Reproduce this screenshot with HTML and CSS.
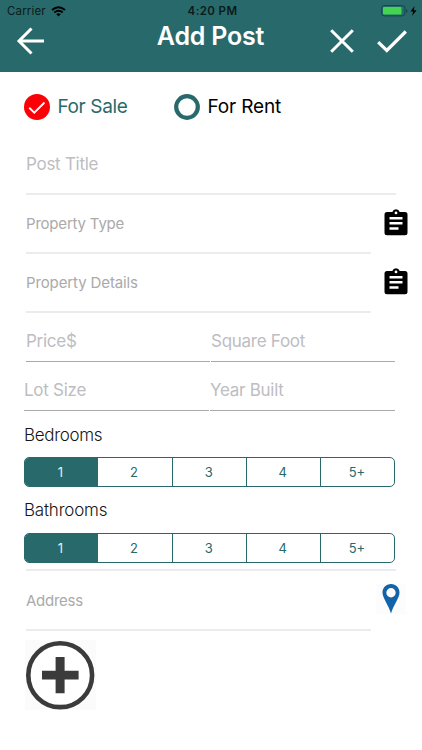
FILE: index.html
```html
<!DOCTYPE html>
<html lang="en">
<head>
<meta charset="utf-8">
<title>Add Post</title>
<link rel="stylesheet" href="styles.css">
</head>
<body>
<header class="header">
  <div class="status">
    <div class="carrier"><span>Carrier</span>
      <svg width="15" height="11" viewBox="0 0 15 11" fill="none" stroke="#000" stroke-width="2"><path d="M1 4Q7.500-1.600 14 4M3.300 6.500Q7.500 3 11.700 6.500"/><path d="M7.500 10.400 5.200 8.100Q7.500 6.300 9.800 8.100Z" fill="#000" stroke="none"/></svg>
    </div>
    <span class="time">4:20 PM</span>
    <svg class="battery" width="37" height="12" viewBox="0 0 37 12"><rect x=".6" y=".6" width="23.300" height="10.300" rx="2.500" fill="none" stroke="#164747"/><rect x="2" y="2" width="18.500" height="7.500" rx="1" fill="#43d551"/><path d="M25.200 4v4q1.300-.5 1.300-2t-1.300-2Z" fill="#164747"/><path d="m33.500 1-4 5.500h2.700L31 11l4.600-5.800h-2.800Z"/></svg>
  </div>
  <div class="nav">
    <svg class="back" width="29" height="28" viewBox="0 0 29 28" fill="none" stroke="#fff" stroke-width="3"><path d="M29 14H4M16.500 1.500 4 14l12.500 12.500"/></svg>
    <h1>Add Post</h1>
    <div class="actions">
      <svg width="24" height="24" viewBox="0 0 24 24" fill="none" stroke="#fff" stroke-width="3"><path d="m1.200 1.200 21.600 21.600M22.800 1.200 1.200 22.800"/></svg>
      <svg width="30" height="24" viewBox="0 0 30 24" fill="none" stroke="#fff" stroke-width="3.200"><path d="m1.200 13.200 8.600 8.300L28.800 2.500"/></svg>
    </div>
  </div>
</header>
<main class="form">
  <div class="choices">
    <div class="choice sale">
      <svg width="26" height="26" viewBox="0 0 26 26"><circle cx="13" cy="13" r="13" fill="#fb0006"/><path d="m5.300 13.700 5 4.900L20.500 8.500" fill="none" stroke="#fff" stroke-width="1.900"/></svg>
      <span>For Sale</span>
    </div>
    <div class="choice rent">
      <svg width="26" height="26" viewBox="0 0 26 26"><circle cx="13" cy="13" r="10.800" fill="none" stroke="#286a6b" stroke-width="4.200"/></svg>
      <span>For Rent</span>
    </div>
  </div>
  <div class="field title"><span>Post Title</span></div>
  <div class="row">
    <div class="field small type"><span>Property Type</span></div>
    <svg class="clip" width="24" height="27" viewBox="0 0 24 27"><path fill-rule="evenodd" d="M3 3h5.300a3.900 3.900 0 0 1 7.400 0H21q2.500 0 2.500 2.500v18.200q0 2.500-2.500 2.500H3Q.5 26.200.5 23.700V5.500Q.5 3 3 3Zm9-.5a1.400 1.400 0 1 0 0 2.800 1.400 1.400 0 0 0 0-2.800ZM5.500 8v2.500h13V8Zm0 5v2.500h13V13Zm0 5.200v2.500h9v-2.500Z"/></svg>
  </div>
  <div class="row">
    <div class="field small details"><span>Property Details</span></div>
    <svg class="clip" width="24" height="27" viewBox="0 0 24 27"><path fill-rule="evenodd" d="M3 3h5.300a3.900 3.900 0 0 1 7.400 0H21q2.500 0 2.500 2.500v18.200q0 2.500-2.500 2.500H3Q.5 26.200.5 23.700V5.500Q.5 3 3 3Zm9-.5a1.400 1.400 0 1 0 0 2.800 1.400 1.400 0 0 0 0-2.800ZM5.500 8v2.500h13V8Zm0 5v2.500h13V13Zm0 5.200v2.500h9v-2.500Z"/></svg>
  </div>
  <div class="pair first"><div><span>Price$</span></div><div><span>Square Foot</span></div></div>
  <div class="pair second"><div><span>Lot Size</span></div><div><span>Year Built</span></div></div>
  <h2 class="bed">Bedrooms</h2>
  <div class="segments"><span class="on">1</span><span>2</span><span>3</span><span>4</span><span>5+</span></div>
  <h2 class="bath">Bathrooms</h2>
  <div class="segments"><span class="on">1</span><span>2</span><span>3</span><span>4</span><span>5+</span></div>
  <div class="divider"></div>
  <div class="row address">
    <div class="field small addr"><span>Address</span></div>
    <svg class="pin" width="30" height="30" viewBox="0 0 30 30"><path fill="#fcfcfc" d="M0 0h30v30H0z"/><path fill="#1263a8" fill-rule="evenodd" d="M15 0c5 0 8.500 3.800 8.500 8.500C23.500 14 17 22 15 29.500 13 22 6.500 14 6.500 8.500 6.500 3.800 10 0 15 0Zm0 4a4.700 4.700 0 1 0 0 9.400A4.700 4.700 0 0 0 15 4Z"/></svg>
  </div>
  <svg class="add" width="71" height="70" viewBox="0 0 71 70"><path fill="#fbfbfb" d="M0 0h71v70H0z"/><circle cx="35.200" cy="35.200" r="31.900" fill="#fff" stroke="#3b3b3b" stroke-width="4.600"/><path d="M30.600 17h9v13.700h14v8.900h-14v13.700h-9V39.600H17v-8.900h13.600Z" fill="#3b3b3b"/></svg>
</main>
</body>
</html>
```
FILE: styles.css
```css
* { box-sizing: border-box; }
body {
  margin: 0;
  width: 422px;
  height: 750px;
  background: #fff;
  font-family: Inter, "Liberation Sans", sans-serif;
  overflow: hidden;
}
svg { display: block; flex: none; }
span { white-space: nowrap; }
.header { height: 71.500px; background: #286a6b; }
.status {
  height: 21px;
  display: grid;
  grid-template-columns: 1fr auto 1fr;
  align-items: center;
  padding: 1px 4px 0 7px;
  font-size: 11.500px;
  color: #0b1a1a;
}
.carrier { display: flex; align-items: center; gap: 5px; letter-spacing: .15px; }
.time { font-weight: 600; letter-spacing: .4px; }
.battery { justify-self: end; }
.nav {
  height: 50px;
  display: grid;
  grid-template-columns: 140px 1fr 141px;
  padding: 0 15px 0 15px;
}
.nav h1 {
  margin: 0;
  text-align: center;
  font-size: 25px;
  line-height: 31px;
  font-weight: 600;
  letter-spacing: -.2px;
  color: #fff;
  white-space: nowrap;
}
.back { margin-top: 6px; }
.actions { display: flex; justify-content: flex-end; gap: 23px; padding-top: 8px; }
.form { padding: 0 27px 0 24px; }
.choices { display: flex; height: 69.500px; padding-top: 22px; }
.choice { display: flex; height: 26px; align-items: center; gap: 8px; font-size: 19px; letter-spacing: -.15px; }
.sale { width: 150px; color: #286a6b; letter-spacing: -.38px; }
.choice svg { margin-left: -.5px; }
.field {
  display: flex;
  align-items: center;
  color: #bdbdc2;
  border-bottom: 2px solid #ebebf0;
}
.title { height: 54px; margin: 0 -1px 0 2px; padding-bottom: 6px; font-size: 17px; letter-spacing: -.28px; }
.row { height: 59px; display: flex; gap: 13px; padding-left: 2px; }
.small { flex: none; width: 345px; color: #aaa; font-size: 15px; letter-spacing: -.2px; }
.details { letter-spacing: -.12px; }
.addr { letter-spacing: -.25px; }
.clip { margin-top: 14px; }
.pair { display: grid; grid-template-columns: 1fr 1fr; gap: 1px; color: #bdbdc2; font-size: 17px; letter-spacing: -.27px; }
.pair > div { display: flex; align-items: center; border-bottom: 1px solid #aaa; }
.first { height: 49px; margin-left: 2px; padding-top: 7px; }
.second { height: 49px; padding-top: 7px; }
h2 { margin: 0; font-size: 17px; font-weight: 350; color: #151515; letter-spacing: -.32px; }
.bed { height: 46px; line-height: 48px; }
.bath { height: 45.500px; line-height: 47px; letter-spacing: -.2px; }
.segments {
  height: 30px;
  margin-left: -.5px;
  display: grid;
  grid-template-columns: 73px repeat(4, 1fr);
  border: 1px solid #286a6b;
  border-radius: 5px;
  overflow: hidden;
  color: #286a6b;
  font-size: 13px;
}
.segments span { display: flex; align-items: center; justify-content: center; border-left: 1px solid #286a6b; padding-right: 1px; }
.segments span.on { background: #286a6b; color: #e4eeee; border-left: 0; }
.segments span.on + span { border-left: 0; }
.divider { height: 2px; margin: 6.500px -1px 0 2px; background: #ebebf0; }
.address { height: 60px; gap: 5px; }
.pin { margin-top: 13px; }
.add { margin: 9px 0 0 1px; }
```
